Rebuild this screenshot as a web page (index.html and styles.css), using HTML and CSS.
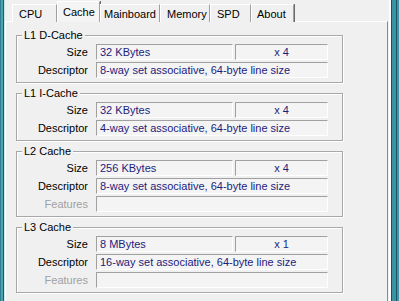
FILE: index.html
```html
<!DOCTYPE html>
<html>
<head>
<meta charset="utf-8">
<link rel="stylesheet" href="styles.css">
</head>
<body>
<div class="window">
  <div class="frame-left"></div>
  <div class="main">
    <div class="tabs">
      <div class="tab t-cpu">CPU</div>
      <div class="tab t-cache selected">Cache</div>
      <div class="tab t-mb">Mainboard</div>
      <div class="tab t-mem">Memory</div>
      <div class="tab t-spd">SPD</div>
      <div class="tab t-about">About</div>
    </div>
    <div class="panel">
      <fieldset class="group">
        <legend>L1 D-Cache</legend>
        <div class="row"><span class="lbl">Size</span><span class="box b1">32 KBytes</span><span class="box b2">x 4</span></div>
        <div class="row"><span class="lbl">Descriptor</span><span class="box full">8-way set associative, 64-byte line size</span></div>
      </fieldset>
      <fieldset class="group">
        <legend>L1 I-Cache</legend>
        <div class="row"><span class="lbl">Size</span><span class="box b1">32 KBytes</span><span class="box b2">x 4</span></div>
        <div class="row"><span class="lbl">Descriptor</span><span class="box full">4-way set associative, 64-byte line size</span></div>
      </fieldset>
      <fieldset class="group">
        <legend>L2 Cache</legend>
        <div class="row"><span class="lbl">Size</span><span class="box b1">256 KBytes</span><span class="box b2">x 4</span></div>
        <div class="row"><span class="lbl">Descriptor</span><span class="box full">8-way set associative, 64-byte line size</span></div>
        <div class="row"><span class="lbl disabled">Features</span><span class="box full"></span></div>
      </fieldset>
      <fieldset class="group">
        <legend>L3 Cache</legend>
        <div class="row"><span class="lbl">Size</span><span class="box b1">8 MBytes</span><span class="box b2">x 1</span></div>
        <div class="row"><span class="lbl">Descriptor</span><span class="box full">16-way set associative, 64-byte line size</span></div>
        <div class="row"><span class="lbl disabled">Features</span><span class="box full"></span></div>
      </fieldset>
    </div>
  </div>
  <div class="frame-right"></div>
</div>
</body>
</html>
```
FILE: styles.css
```css
* { box-sizing: border-box; }
html, body { margin: 0; padding: 0; }
body {
  width: 399px;
  height: 301px;
  overflow: hidden;
  background: #f0f0f0;
  font-family: "Liberation Sans", Arial, sans-serif;
  font-size: 11px;
  color: #000;
}
.window {
  display: flex;
  height: 301px;
}
.frame-left {
  width: 5px;
  flex: none;
  background: linear-gradient(to right, #2e7f90 0, #2e7f90 1px, #4aa2b3 1px, #4aa2b3 3px, #1d5c6b 3px, #1d5c6b 4px, #cfe3e8 4px);
}
.frame-right {
  width: 11px;
  flex: none;
  background: linear-gradient(to right, #f0f0f0 0, #f0f0f0 1px, #ffffff 1px, #ffffff 3px, #1f4f5a 3px, #1f4f5a 4px, #3a93a5 4px, #3a93a5 8px, #1d5562 8px, #1d5562 9px, #3a97a8 9px);
}
.main {
  flex: 1;
  display: flex;
  flex-direction: column;
}
.tabs {
  display: flex;
  height: 21px;
  padding-left: 7px;
  position: relative;
  z-index: 1;
}
.tab {
  margin-top: 4px;
  height: 18px;
  padding: 2px 0 0 6px;
  line-height: 14px;
  border-top: 1px solid #ffffff;
  border-left: 1px solid #ffffff;
  border-right: 1px solid #a0a0a0;
  box-shadow: 1px 0 0 #6a6a6a;
  background: #f0f0f0;
}
.tab.selected {
  margin-top: 1px;
  height: 21px;
  padding-top: 3px;
  background: #f4f4f4;
}
.t-cpu { width: 45px; }
.t-cache { width: 43px; padding-left: 5px; }
.t-mb { width: 60px; padding-left: 3px; }
.t-mem { width: 50px; padding-left: 6px; }
.t-spd { width: 41px; }
.t-about { width: 43px; padding-left: 5px; }
.panel {
  flex: 1;
  border-top: 1px solid #ffffff;
  border-left: 1px solid #ffffff;
  border-right: 1px solid #8a8a8a;
  padding: 7px 0 0 10px;
  display: flex;
  flex-direction: column;
  gap: 4px;
}
.group {
  margin: 0;
  width: 327px;
  padding: 2px 14px 4px 0;
  border: 1px solid #a8a8a8;
  box-shadow: 1px 1px 0 #ffffff, inset 1px 1px 0 #ffffff;
  display: flex;
  flex-direction: column;
  gap: 2px;
  min-width: 0;
}
.group legend {
  margin-left: 5px;
  padding: 0 2px;
  line-height: 13px;
  background: #f0f0f0;
}
.row {
  display: flex;
  gap: 0;
  height: 16px;
}
.lbl {
  width: 71px;
  text-align: right;
  line-height: 16px;
  margin-right: 8px;
}
.lbl.disabled { color: #a0a0a0; }
.box {
  height: 16px;
  line-height: 14px;
  border-top: 1px solid #a0a0a0;
  border-left: 1px solid #a0a0a0;
  border-bottom: 1px solid #ffffff;
  border-right: 1px solid #ffffff;
  background: #f4f4f4;
  color: #1c1c7c;
  padding-left: 3px;
  white-space: nowrap;
  overflow: hidden;
}
.b1 { width: 137px; margin-right: 2px; }
.b2 { width: 93px; text-align: center; padding-left: 0; }
.full { width: 232px; }
```
